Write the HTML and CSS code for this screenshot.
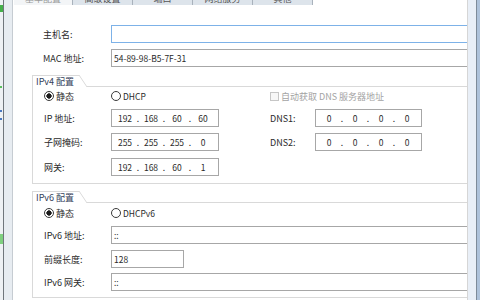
FILE: index.html
```html
<!DOCTYPE html>
<html lang="zh-CN">
<head>
    <meta charset="UTF-8">
    <title>网络配置</title>
    <link rel="stylesheet" href="styles.css">
</head>
<body>
  <div class="window">
    <div class="frame-left"></div>

    <div class="panel">
      <div class="tabs">
        <div class="tab active"><span>基本配置</span></div>
        <div class="tab"><span>高级设置</span></div>
        <div class="tab"><span>端口</span></div>
        <div class="tab"><span>网络服务</span></div>
        <div class="tab"><span>其他</span></div>
      </div>

      <div class="top">
        <div class="row">
          <div class="label">主机名:</div>
          <div class="field wide focus"></div>
        </div>
        <div class="row">
          <div class="label">MAC 地址:</div>
          <div class="field wide">54-89-98-B5-7F-31</div>
        </div>
      </div>

      <div class="group">
        <div class="group-head">
          <div class="group-tab">IPv4 配置</div>
          <div class="group-slant"></div>
          <div class="group-rule"></div>
        </div>
        <div class="group-body">
          <div class="radio-row">
            <div class="radio first"><span class="dot checked"></span>静态</div>
            <div class="radio second"><span class="dot"></span>DHCP</div>
            <div class="check"><span class="box"></span>自动获取 DNS 服务器地址</div>
          </div>
          <div class="row">
            <div class="label g">IP 地址:</div>
            <div class="field ip">
              <span class="seg">192</span><span class="sep">.</span><span class="seg">168</span><span class="sep">.</span><span class="seg">60</span><span class="sep">.</span><span class="seg">60</span>
            </div>
            <div class="label2">DNS1:</div>
            <div class="field ip dns">
              <span class="seg">0</span><span class="sep">.</span><span class="seg">0</span><span class="sep">.</span><span class="seg">0</span><span class="sep">.</span><span class="seg">0</span>
            </div>
          </div>
          <div class="row">
            <div class="label g">子网掩码:</div>
            <div class="field ip">
              <span class="seg">255</span><span class="sep">.</span><span class="seg">255</span><span class="sep">.</span><span class="seg">255</span><span class="sep">.</span><span class="seg">0</span>
            </div>
            <div class="label2">DNS2:</div>
            <div class="field ip dns">
              <span class="seg">0</span><span class="sep">.</span><span class="seg">0</span><span class="sep">.</span><span class="seg">0</span><span class="sep">.</span><span class="seg">0</span>
            </div>
          </div>
          <div class="row r7">
            <div class="label g">网关:</div>
            <div class="field ip">
              <span class="seg">192</span><span class="sep">.</span><span class="seg">168</span><span class="sep">.</span><span class="seg">60</span><span class="sep">.</span><span class="seg">1</span>
            </div>
          </div>
        </div>
      </div>

      <div class="group v6">
        <div class="group-head">
          <div class="group-tab">IPv6 配置</div>
          <div class="group-slant"></div>
          <div class="group-rule"></div>
        </div>
        <div class="group-body">
          <div class="radio-row">
            <div class="radio first"><span class="dot checked"></span>静态</div>
            <div class="radio second"><span class="dot"></span>DHCPv6</div>
          </div>
          <div class="row">
            <div class="label g">IPv6 地址:</div>
            <div class="field wide">::</div>
          </div>
          <div class="row">
            <div class="label g">前缀长度:</div>
            <div class="field prefix">128</div>
          </div>
          <div class="row r5">
            <div class="label g">IPv6 网关:</div>
            <div class="field wide">::</div>
          </div>
        </div>
      </div>
    </div>

    <div class="frame-right"></div>
  </div>
</body>
</html>
```

FILE: styles.css
```css
body {
  margin: 0;
  font-family: "Noto Sans CJK SC", "Liberation Sans", sans-serif;
  font-size: 9px;
  color: #2a2a2a;
}

.window {
  display: flex;
  width: 480px;
  height: 300px;
  overflow: hidden;
  background: #fff;
}

/* window edges */
.frame-left {
  width: 14px;
  flex: none;
  background:
    linear-gradient(#45b04a, #45b04a) no-repeat 0 5px / 3px 7px,
    linear-gradient(#5cc05f, #5cc05f) no-repeat 0 86px / 2px 2px,
    linear-gradient(#4a78c0, #4a78c0) no-repeat 0 110px / 2px 2px,
    linear-gradient(#4a78c0, #4a78c0) no-repeat 0 118px / 2px 2px,
    linear-gradient(#7fd07f, #7fd07f) no-repeat 0 234px / 3px 10px,
    linear-gradient(to right, #eef1f4 0 3px, #70767c 3px 4px, #e7ecf1 4px 12px, #c6ccd2 12px 13px, #fff 13px);
}

.frame-right {
  flex: 1;
  background: linear-gradient(to right, #e9eff7 0 8px, #7e8b99 8px 9px, #aec2da 9px);
}

.panel {
  width: 453px;
  flex: none;
  border-right: 1px solid #d6d6d6;
  overflow: hidden;
}

/* tab strip, mostly scrolled out of view */
.tabs {
  display: flex;
  height: 5px;
  overflow: hidden;
}
.tab {
  width: 59px;
  flex: none;
  display: flex;
  align-items: flex-end;
  justify-content: center;
  border-right: 1px solid #a9b2bc;
  background: #dde4eb;
  color: #555;
  line-height: 12px;
}
.tab.active {
  width: 58px;
  background: #f3f5f7;
  color: #999;
}

.top {
  padding: 20px 0 0 29px;
}

.row {
  display: flex;
  align-items: center;
  height: 18px;
  margin-top: 6px;
}
.top .row:first-child {
  margin-top: 0;
}
.row.r7 {
  margin-top: 7px;
}
.row.r5 {
  margin-top: 5px;
}

.label {
  width: 68px;
  flex: none;
}
.label.g {
  width: 67px;
}
.label2 {
  width: 45px;
  flex: none;
  margin-left: 51px;
}

.field {
  height: 18px;
  box-sizing: border-box;
  flex: none;
  display: flex;
  align-items: center;
  padding: 0 2px;
  border: 1px solid #a7a7a7;
  background: #fff;
  font-size: 8.5px;
}
.field.wide {
  width: 400px;
}
.field.focus {
  border-color: #7db2e8;
}
.field.prefix {
  width: 73px;
}
.field.ip {
  width: 108px;
  padding: 0 3px;
}
.field.dns {
  width: 107px;
}
.seg {
  width: 20px;
  text-align: center;
}
.sep {
  width: 6px;
  text-align: center;
}

/* group boxes */
.group {
  margin: 8px -30px 0 18px;
  border-left: 1px solid #d9d9d9;
  border-bottom: 1px solid #d9d9d9;
}
.group.v6 {
  margin-top: 7px;
}
.group-head {
  display: flex;
  height: 12px;
}
.group-tab {
  width: 46px;
  box-sizing: border-box;
  border-top: 1px solid #d9d9d9;
  padding-left: 3px;
  line-height: 11px;
  color: #34405a;
  white-space: nowrap;
}
.group-slant {
  width: 8px;
  background: linear-gradient(to top right, transparent calc(50% - 0.8px), #d9d9d9 50%, transparent calc(50% + 0.8px));
}
.group-rule {
  flex: 1;
  border-bottom: 1px solid #d9d9d9;
}
.group-body {
  padding: 0 0 7px 11px;
}
.v6 .group-body {
  padding-bottom: 6px;
}

.radio-row {
  display: flex;
  align-items: center;
  height: 14px;
  margin-top: 2px;
}
.v6 .radio-row {
  margin-top: 3px;
}
.radio {
  display: flex;
  align-items: center;
  flex: none;
}
.radio.first {
  width: 67px;
}
.radio.second {
  width: 159px;
  font-size: 8.5px;
}
.dot {
  width: 10px;
  height: 10px;
  box-sizing: border-box;
  border: 1px solid #3a3a3a;
  border-radius: 50%;
  margin-right: 2px;
  background: #fff;
}
.dot.checked {
  background: radial-gradient(circle, #1a1a1a 0 2.4px, #fff 2.9px);
}

.check {
  display: flex;
  align-items: center;
  color: #a3a3a3;
}
.box {
  width: 9px;
  height: 9px;
  box-sizing: border-box;
  border: 1px solid #c6c6c6;
  margin-right: 2px;
  background: #f7f7f7;
}
```
